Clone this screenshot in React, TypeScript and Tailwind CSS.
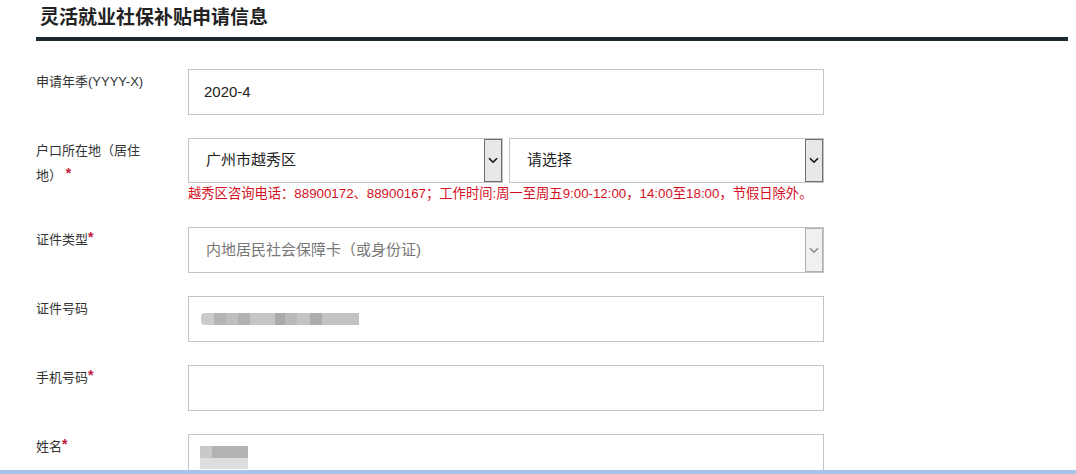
import React from "react";

// 模糊处理过的证件号码色块
const idBlocks = [
  { w: "w-[13px]", c: "bg-[#cbcbcb] rounded-l-[4px]" },
  { w: "w-[12px]", c: "bg-[#b5b5b5]" },
  { w: "w-[12px]", c: "bg-[#bfbfbf]" },
  { w: "w-[12px]", c: "bg-[#b1b1b1]" },
  { w: "w-[25px]", c: "bg-[#c5c5c5]" },
  { w: "w-[10px]", c: "bg-[#a9a9a9]" },
  { w: "w-[12px]", c: "bg-[#b9b9b9]" },
  { w: "w-[13px]", c: "bg-[#c3c3c3]" },
  { w: "w-[12px]", c: "bg-[#acacac]" },
  { w: "w-[37px]", c: "bg-[#c3c3c3]" },
];

function Star() {
  return <span className="relative top-[-2px] text-[#c4173a] font-bold text-[14px]">*</span>;
}

function Chevron({ color }: { color: string }) {
  return (
    <svg width="10" height="7" viewBox="0 0 10 7" fill="none">
      <polyline points="1,1.2 5,5.2 9,1.2" stroke={color} strokeWidth="1.6" />
    </svg>
  );
}

function SelectBox({
  value,
  width,
  disabled,
}: {
  value: string;
  width: string;
  disabled?: boolean;
}) {
  return (
    <div className={`${width} h-full flex border border-[#c4c4c4] bg-white`}>
      <div
        className={`flex-1 flex items-center pl-[17px] text-[15px] ${
          disabled ? "text-[#777]" : "text-[#222]"
        }`}>
        {value}
      </div>
      <div
        className={`w-[18px] flex items-center justify-center border ${
          disabled ? "bg-[#f0f0f0] border-[#b0b0b0]" : "bg-[#e8e8e8] border-[#6f6f6f]"
        }`}>
        <Chevron color={disabled ? "#8a8a8a" : "#111"} />
      </div>
    </div>
  );
}

function Row({ label, children }: { label: React.ReactNode; children: React.ReactNode }) {
  return (
    <div className="flex">
      <div className="w-[152px] shrink-0 pr-6 text-[13px] leading-[25px] text-[#333]">{label}</div>
      <div className="w-[636px]">{children}</div>
    </div>
  );
}

export default function App() {
  return (
    <div
      className="h-[474px] w-[1076px] bg-white flex flex-col overflow-hidden"
      style={{ fontFamily: '"Liberation Sans", "Noto Sans CJK SC", sans-serif' }}>
      <div className="flex-1 overflow-hidden pl-9">
        <h2 className="pt-[5px] pl-1 text-[19px] leading-[26px] font-bold text-[#222]">
          灵活就业社保补贴申请信息
        </h2>
        <div className="mt-[6px] h-1 w-[1032px] bg-[#1c2930]" />

        <div className="mt-[28px] flex flex-col gap-[23px]">
          {/* 申请年季 */}
          <Row label="申请年季(YYYY-X)">
            <div className="h-[46px] border border-[#c4c4c4] flex items-center pl-[15px] text-[15px] text-[#222]">
              2020-4
            </div>
          </Row>

          {/* 户口所在地 */}
          <Row
            label={
              <>
                户口所在地（居住地） <Star />
              </>
            }>
            <div className="h-[45px] flex gap-[6px]">
              <SelectBox value="广州市越秀区" width="w-[315px]" />
              <SelectBox value="请选择" width="w-[315px]" />
            </div>
            <p className="mt-[1px] text-[13.3px] leading-[20px] text-[#d4101e] whitespace-nowrap">
              越秀区咨询电话：88900172、88900167；工作时间:周一至周五9:00-12:00，14:00至18:00，节假日除外。
            </p>
          </Row>

          {/* 证件类型 */}
          <Row
            label={
              <>
                证件类型<Star />
              </>
            }>
            <div className="h-[46px]">
              <SelectBox value="内地居民社会保障卡（或身份证)" width="w-[636px]" disabled />
            </div>
          </Row>

          {/* 证件号码 */}
          <Row label="证件号码">
            <div className="h-[46px] border border-[#c4c4c4] pl-3 pt-4">
              <div className="flex h-[12px] blur-[0.6px]">
                {idBlocks.map((b, i) => (
                  <div key={i} className={`${b.w} ${b.c}`} />
                ))}
              </div>
            </div>
          </Row>

          {/* 手机号码 */}
          <Row
            label={
              <>
                手机号码<Star />
              </>
            }>
            <div className="h-[46px] border border-[#c4c4c4]" />
          </Row>

          {/* 姓名 */}
          <Row
            label={
              <>
                姓名<Star />
              </>
            }>
            <div className="h-[46px] border border-[#c4c4c4] pl-[11px] pt-[11px]">
              <div className="w-[48px] blur-[0.6px]">
                <div className="flex h-[12px]">
                  <div className="w-[12px] bg-[#c9c9c9]" />
                  <div className="flex-1 bg-[#b2b2b2]" />
                </div>
                <div className="h-[11px] bg-[#dedede]" />
              </div>
            </div>
          </Row>
        </div>
      </div>
      <div className="h-1 bg-[#a7c3e7]" />
    </div>
  );
}
